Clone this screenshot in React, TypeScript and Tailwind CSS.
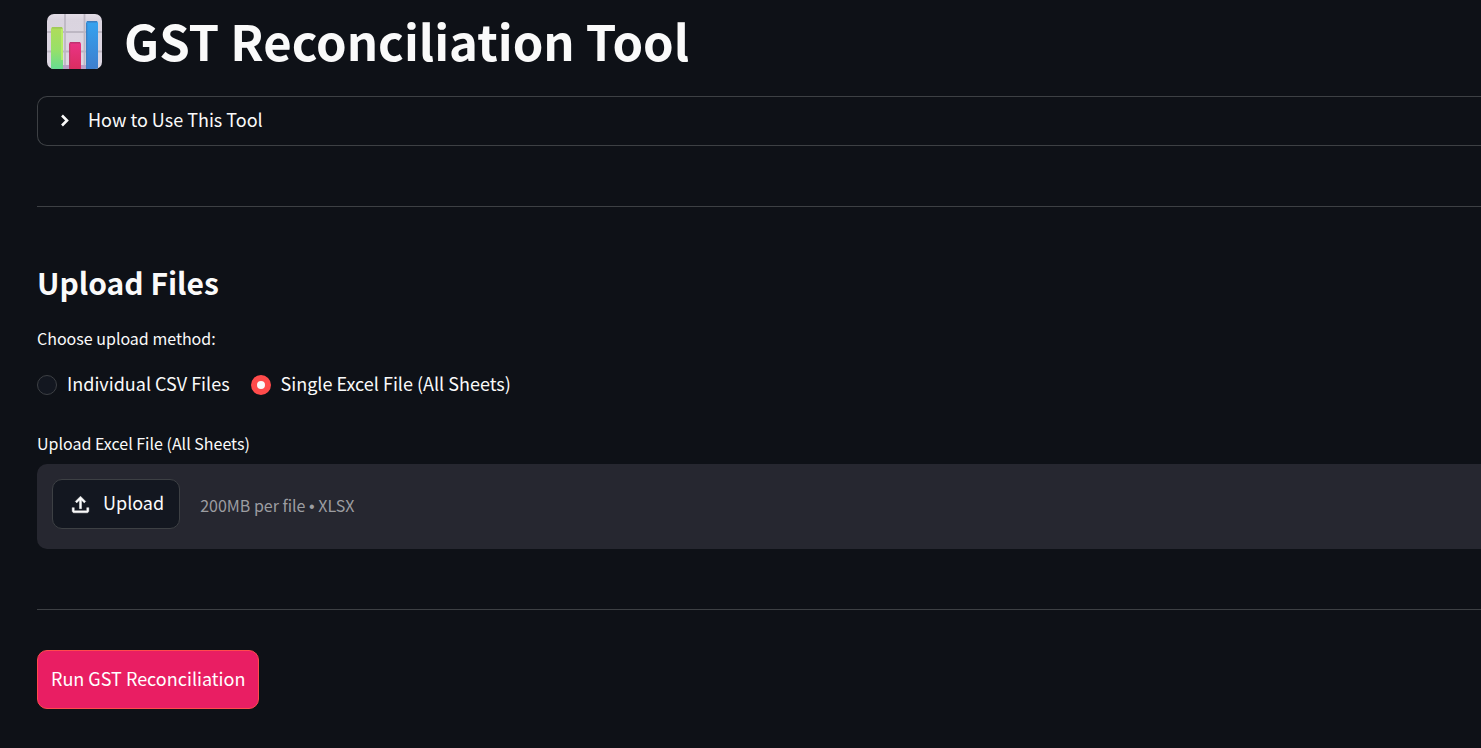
import { useRef, useState } from "react";

function BarChartIcon() {
  return (
    <svg width="55" height="56" viewBox="0 0 55 56" aria-hidden="true" className="shrink-0">
      <defs>
        <linearGradient id="paper" x1="0" y1="0" x2="0" y2="1">
          <stop offset="0" stopColor="#e2dce6" />
          <stop offset="0.1" stopColor="#dad4df" />
          <stop offset="1" stopColor="#ddd7e3" />
        </linearGradient>
        <linearGradient id="green" x1="0" y1="0" x2="0" y2="1">
          <stop offset="0" stopColor="#b0dc5a" />
          <stop offset="0.5" stopColor="#98e068" />
          <stop offset="1" stopColor="#5edc98" />
        </linearGradient>
        <linearGradient id="pink" x1="0" y1="0" x2="0" y2="1">
          <stop offset="0" stopColor="#ea3486" />
          <stop offset="1" stopColor="#d92c5c" />
        </linearGradient>
        <linearGradient id="blue" x1="0" y1="0" x2="0" y2="1">
          <stop offset="0" stopColor="#35a3f0" />
          <stop offset="1" stopColor="#3f7dcc" />
        </linearGradient>
        <clipPath id="tile">
          <rect width="55" height="55" rx="7" />
        </clipPath>
      </defs>
      <g clipPath="url(#tile)">
        <rect width="55" height="55" fill="url(#paper)" />
        <path d="M18 0V55M37.500 0V55M0 18H55M0 37.500H55" stroke="#bdb7c3" strokeWidth="1.800" />
        <rect x="16" y="51" width="23" height="4" fill="#b9a0c8" />
        <rect x="4" y="13" width="12" height="45" rx="2" fill="url(#green)" />
        <path d="M15 15V46" stroke="#c0f268" strokeWidth="1.500" />
        <path d="M5 13.800H15" stroke="#9cc458" strokeWidth="1.200" />
        <rect x="22" y="28" width="12" height="30" rx="2" fill="url(#pink)" />
        <path d="M23 28.800H33" stroke="#bf3370" strokeWidth="1.500" />
        <path d="M22.700 30V55" stroke="#c23a6a" strokeWidth="1.200" />
        <rect x="39" y="7" width="12" height="50" rx="2" fill="url(#blue)" />
        <path d="M40 7.800H50" stroke="#3a7fc2" strokeWidth="1.500" />
        <path d="M39.700 9V55" stroke="#3a7fc2" strokeWidth="1.200" />
      </g>
    </svg>
  );
}

function ChevronRight() {
  return (
    <svg width="20" height="20" viewBox="0 0 20 20" fill="none" stroke="currentColor" strokeWidth="2.600" aria-hidden="true">
      <path d="M6 4.500L11 9.500L6 14.500" />
    </svg>
  );
}

function UploadIcon() {
  return (
    <svg width="25" height="25" viewBox="0 0 24 24" fill="currentColor" stroke="currentColor" strokeWidth="0.400" aria-hidden="true">
      <path d="M11 16V7.850L8.400 10.450L7 9L12 4L17 9L15.600 10.450L13 7.850V16H11ZM6 20C5.450 20 4.979 19.804 4.588 19.413C4.196 19.021 4 18.550 4 18V15H6V18H18V15H20V18C20 18.550 19.804 19.021 19.413 19.413C19.021 19.804 18.550 20 18 20H6Z" />
    </svg>
  );
}

const methods = ["Individual CSV Files", "Single Excel File (All Sheets)"];

export default function App() {
  const [method, setMethod] = useState(methods[1]);
  const fileInput = useRef<HTMLInputElement>(null);

  return (
    <main className="min-h-screen bg-[#0e1117] pt-[10px] pb-10 pl-[37px] font-['Noto_Sans_CJK_SC',sans-serif] text-lg font-normal text-[#fafafa]">
      <h1 className="flex items-end gap-[22px] pl-[10px] text-[49px] leading-[60px] font-bold">
        <BarChartIcon />
        GST Reconciliation Tool
      </h1>

      <details className="mt-[26px] rounded-l-[10px] border border-r-0 border-[#3d4044]">
        <summary className="flex h-12 cursor-pointer list-none items-center gap-3 px-[18px]">
          <ChevronRight />
          <span className="pb-1">How to Use This Tool</span>
        </summary>
        <p className="px-5 pb-5">Choose an upload method, add your files, then run the reconciliation.</p>
      </details>

      <hr className="mt-[60px] border-[#3d4044]" />

      <section>
        <h2 className="mt-[55px] text-[30px] leading-10 font-bold">Upload Files</h2>

        <fieldset className="mt-6">
          <legend className="text-base leading-6">Choose upload method:</legend>
          <div className="mt-[21px] flex flex-wrap gap-[21px]">
            {methods.map((name) => (
              <label key={name} className="flex items-center gap-[10px] leading-7">
                <input
                  type="radio"
                  name="method"
                  checked={method === name}
                  onChange={() => setMethod(name)}
                  className="size-5 appearance-none rounded-full border border-[#3d4044] bg-[#131720] checked:border-[6px] checked:border-[#ff4b4b] checked:bg-[#fafafa]"
                />
                <span className="pb-[3px] leading-[25px]">{name}</span>
              </label>
            ))}
          </div>
        </fieldset>

        <label htmlFor="excel-file" className="mt-8 block text-base leading-6">
          Upload Excel File (All Sheets)
        </label>
        <div className="mt-[9px] flex items-start gap-5 rounded-l-[10px] bg-[#262730] px-[15px] pt-[15px] pb-5">
          <input ref={fileInput} id="excel-file" type="file" accept=".xlsx" className="hidden" />
          <button
            type="button"
            onClick={() => fileInput.current?.click()}
            className="flex h-[50px] items-center gap-[10px] rounded-[10px] border border-[#3d4044] bg-[#131720] px-[15px]"
          >
            <UploadIcon />
            <span className="pb-1">Upload</span>
          </button>
          <span className="mt-[14px] text-base leading-6 text-[#9c9da1]">
            200MB per file <span className="font-['Liberation_Sans',sans-serif]">•</span> XLSX
          </span>
        </div>
      </section>

      <hr className="mt-[60px] border-[#3d4044]" />

      <button type="button" className="mt-10 h-[59px] rounded-[10px] border border-[#ff4b4b] bg-[#e91e63] px-[13px] pb-1 text-white">
        Run GST Reconciliation
      </button>
    </main>
  );
}
